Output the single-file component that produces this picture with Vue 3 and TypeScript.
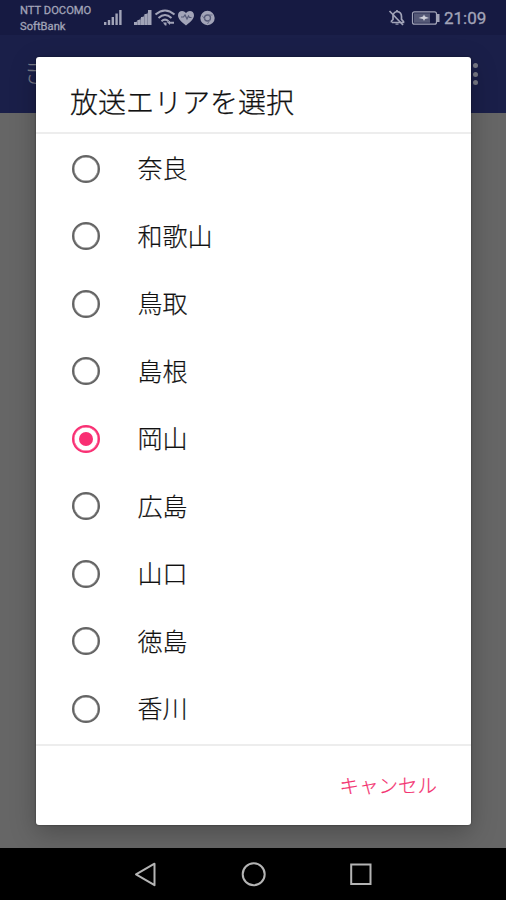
<script setup lang="ts">
import { ref } from 'vue'

const areas: string[] = ['奈良', '和歌山', '鳥取', '島根', '岡山', '広島', '山口', '徳島', '香川']
const selected = ref<string>('岡山')
</script>

<template>
  <div class="screen">
    <header class="status">
      <div class="carriers"><span>NTT DOCOMO</span><span>SoftBank</span></div>
      <svg class="status-icons" width="112" height="20" viewBox="0 0 112 20">
        <g fill="#a2a4b8">
          <path d="M0 13h2.400v3H0zM3.800 11h2.400v5H3.800zM7.600 8h2.400v8H7.600zM11.400 4.500h2.400V16h-2.400zM15.200 1h2.400v15h-2.400z" />
          <path d="M30 13h3v3h-3zM33.500 11h3v5h-3zM37 8h3v8h-3zM40.500 5h3v11h-3zM44 1h3.500v15H44z" />
          <path d="M30 14.500L47 1v15H30z" opacity=".55" />
          <path d="M82 16.500C77 12.500 74 10 74 6.300C74 1.500 79.500.5 82 4C84.500.5 90 1.500 90 6.300C90 10 87 12.500 82 16.500z" />
          <circle cx="103.500" cy="9" r="7.200" />
        </g>
        <g fill="none" stroke="#a2a4b8" stroke-width="2">
          <path d="M51.500 5.500Q61-2.500 70.500 5.500M54.500 9Q61 3 67.500 9M57.500 12.300Q61 9 64.500 12.300" />
        </g>
        <path d="M59 13.500h3.500v3H61zM63 13.300l3-1.500v1h4v2h-4v1.200z" fill="#a2a4b8" />
        <path d="M77 8h2.500l1.500-2 2 4 1.500-3 1 1.500h2" fill="none" stroke="#555a78" stroke-width="1.200" />
        <circle cx="103.500" cy="9" r="3" fill="none" stroke="#555a78" stroke-width="1.300" />
        <path d="M103.500 6h5M101 10.500l-3-4M106 10.500l-2.500 4.500" stroke="#6b6f89" stroke-width="1" />
      </svg>
      <svg class="system-icons" width="52" height="20" viewBox="0 0 52 20">
        <g fill="none" stroke="#a2a4b8" stroke-width="1.700">
          <path d="M3.500 13.500V12l1.500-1.500V7q0-3.500 4-4.500 4.500.5 4.500 5v2.800l2 2.200v1H4M9 1v2" />
          <path d="M1.500 2l13.500 14" />
          <rect x="24.500" y="2.800" width="24" height="12.400" rx="2" stroke-width="1.200" />
        </g>
        <path d="M7.500 14.500h3v1.200h-3z" fill="#a2a4b8" />
        <rect x="26" y="4.300" width="16" height="9.500" fill="#555977" />
        <path d="M30.500 9l4.500-1.500 1-2 1 2 4 1.500-4 1-1 2-1-2z" fill="#d0d1dc" />
        <path d="M49 5h2.500v8H49z" fill="#a2a4b8" />
      </svg>
      <time class="clock">21:09</time>
    </header>
    <div class="appbar">
      <span class="app-title">き</span>
      <span class="more"><i></i><i></i><i></i></span>
    </div>
    <main class="content"></main>
    <nav class="navigation">
      <svg width="506" height="52" viewBox="0 0 506 52" fill="none" stroke="#b4b4b4" stroke-width="2">
        <path d="M154.500 15.700v21.500L136 26.300z" stroke-linejoin="round" />
        <circle cx="253.700" cy="26.300" r="11" />
        <path d="M351.200 16.600h19.300v19.300h-19.300z" />
      </svg>
    </nav>

    <section class="dialog" role="dialog">
      <h1>放送エリアを選択</h1>
      <div class="options">
        <label v-for="area in areas" :key="area" class="option">
          <input v-model="selected" type="radio" name="area" :value="area" />
          <span>{{ area }}</span>
        </label>
      </div>
      <footer><button type="button">キャンセル</button></footer>
    </section>
  </div>
</template>

<style>
body { margin: 0; }
</style>

<style scoped>
.screen {
  position: relative;
  display: flex;
  flex-direction: column;
  width: 506px;
  height: 900px;
  overflow: hidden;
  background: #666;
  font-family: Roboto, "Noto Sans CJK JP", sans-serif;
}
.status {
  display: flex;
  box-sizing: border-box;
  height: 35px;
  padding: 0 19px 0 20px;
  background: #161a42;
  color: #a2a4b8;
}
.carriers {
  display: flex;
  flex-direction: column;
  width: 84px;
  padding-top: 3px;
  font-size: 11.200px;
  line-height: 15.500px;
  white-space: nowrap;
  -webkit-text-stroke: .3px currentColor;
}
.status-icons { margin-top: 9px; }
.system-icons { margin: 9px 4px 0 auto; }
.clock {
  width: 43px;
  font-size: 17px;
  line-height: 36px;
  -webkit-text-stroke: .3px currentColor;
}
.appbar {
  display: flex;
  justify-content: space-between;
  align-items: center;
  box-sizing: border-box;
  height: 78px;
  padding: 0 28px 0 23px;
  background: #1a1f49;
  color: #777985;
}
.app-title { font-size: 28px; font-weight: 300; line-height: 36px; }
.more { display: grid; gap: 3.500px; }
.more i { width: 5px; height: 5px; border-radius: 50%; background: #777985; }
.content { flex: 1; }
.navigation { height: 52px; background: #000; }
.navigation svg { display: block; }
.dialog {
  position: absolute;
  top: 57px;
  left: 36px;
  display: flex;
  flex-direction: column;
  width: 435px;
  height: 768px;
  border-radius: 3px;
  background: #fff;
  box-shadow: 0 0 2px rgba(0, 0, 0, .5), 0 8px 26px rgba(0, 0, 0, .25);
}
h1 {
  box-sizing: border-box;
  height: 77px;
  margin: 0;
  padding: 26px 33px 0 34px;
  border-bottom: 2px solid #ededed;
  color: #111;
  font-size: 28px;
  font-weight: 300;
  line-height: 42px;
  -webkit-text-stroke: .25px currentColor;
}
.options {
  box-sizing: border-box;
  height: 612px;
  padding: 1px 0 2px 36px;
  border-bottom: 2px solid #ededed;
}
.option {
  display: flex;
  align-items: center;
  gap: 37.500px;
  height: 67.500px;
  color: #111;
  font-size: 25px;
  font-weight: 300;
}
.option span {
  padding-bottom: 3px;
  -webkit-text-stroke: .2px currentColor;
}
input {
  display: grid;
  place-items: center;
  appearance: none;
  box-sizing: border-box;
  width: 28px;
  height: 28px;
  margin: 0;
  border: 2px solid #646464;
  border-radius: 50%;
  box-shadow: inset 0 0 0 .5px #777;
}
input:checked { border-color: #f92f73; box-shadow: inset 0 0 0 .5px #f92f73; }
input:checked::after {
  width: 14px;
  height: 14px;
  border-radius: 50%;
  background: #f92f73;
  content: "";
}
footer {
  display: flex;
  flex: 1;
  align-items: center;
  justify-content: flex-end;
  padding: 2px 34px 0 0;
}
button {
  padding: 0;
  border: 0;
  background: none;
  color: #f33371;
  font: 300 19.500px/30px Roboto, "Noto Sans CJK JP", sans-serif;
  -webkit-text-stroke: .2px currentColor;
}
</style>
